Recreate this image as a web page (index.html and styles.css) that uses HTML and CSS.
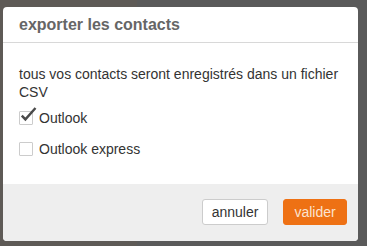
FILE: index.html
```html
<!DOCTYPE html>
<html lang="fr">
<head>
  <meta charset="UTF-8" />
  <meta name="viewport" content="width=device-width, initial-scale=1.0"/>
  <title>exporter les contacts</title>
  <link rel="stylesheet" href="styles.css">
</head>
<body>

  <div class="modal">
    <div class="modal-header">
      <h3>exporter les contacts</h3>
    </div>
    <div class="modal-body">
      <p>tous vos contacts seront enregistrés dans un fichier CSV</p>
      <label class="option">
        <span class="box checked">
          <svg width="17" height="17" viewBox="0 0 17 17"><path d="M1.8 8.6 L5.4 12.4 L15.5 1" fill="none" stroke="#4a4a4a" stroke-width="2.4" stroke-linejoin="miter"/></svg>
        </span>
        Outlook
      </label>
      <label class="option">
        <span class="box"></span>
        Outlook express
      </label>
    </div>
    <div class="modal-footer">
      <button class="btn">annuler</button>
      <button class="btn btn-primary">valider</button>
    </div>
  </div>

</body>
</html>
```

FILE: styles.css
```css
body {
  margin: 0;
  font-family: 'Liberation Sans', Arial, sans-serif;
  background: linear-gradient(to right, #5e5a56 137px, #5a5a5a 137px);
  min-height: 246px;
  overflow: hidden;
}
.modal {
  margin: 7px 0 0 3px;
  width: 355px;
  background: #fff;
  border-radius: 4px;
  overflow: hidden;
}
.modal-header {
  padding: 8px 16px 7px;
  border-bottom: 1px solid #d8d8d8;
}
.modal-header h3 {
  margin: 0;
  font-size: 16px;
  line-height: 20px;
  font-weight: bold;
  color: #666;
}
.modal-body {
  padding: 22px 16px 25px;
  color: #333;
  font-size: 14px;
}
.modal-body p {
  margin: 0 0 7px;
  line-height: 18px;
}
.option {
  display: flex;
  align-items: center;
  gap: 6px;
  height: 20px;
  margin-bottom: 11px;
}
.option:last-child {
  margin-bottom: 0;
}
.box {
  position: relative;
  width: 14px;
  height: 14px;
  border: 1px solid #ccc;
  box-sizing: border-box;
  border-radius: 1px;
  background: #fff;
}
.box svg {
  position: absolute;
  left: 0;
  top: -5px;
}
.modal-footer {
  background: #eee;
  padding: 15px 11px 16px;
  display: flex;
  justify-content: flex-end;
  gap: 15px;
}
.btn {
  font-family: 'Liberation Sans', Arial, sans-serif;
  font-size: 14px;
  height: 26px;
  width: 66px;
  padding: 0;
  border: 1px solid #ccc;
  border-radius: 3px;
  background: #fff;
  color: #333;
}
.btn-primary {
  width: 64px;
  background: #ee7114;
  border-color: #ee7114;
  color: #fbe3d0;
}
```
